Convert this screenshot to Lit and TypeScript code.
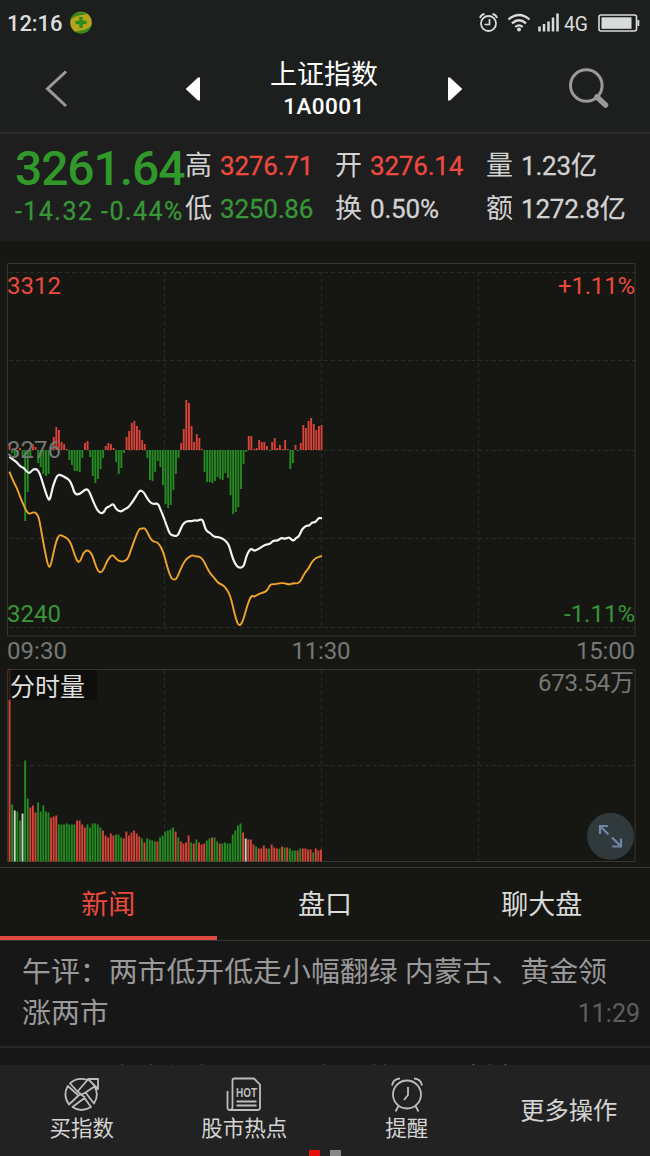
import { LitElement, html, svg, css } from "lit";
import { customElement } from "lit/decorators.js";

// Momentum bars, one per minute; positive values rise above the previous close.
const MOMENTUM = [
  7, -3, -7, -5, 2, -7, -71, -42, -7, 6, 3, -13, -17, -24, -26, -24, 2, 13, 23, 20, 8,
  6, 1, -10, -15, -21, -21, -22, -8, 7, 9, -7, -26, -33, -29, -19, -8, 4, 7, 6, 2,
  -12, -24, -18, -3, 13, 19, 27, 29, 24, 20, 10, 6, -8, -30, -31, -22, -11,
  -17, -35, -54, -58, -55, -40, -24, -8, 7, 21, 50, 47, 24, 8, 16, 12, 1,
  -22, -32, -32, -33, -31, -27, -29, -30, -23, -28, -45, -64, -62, -57, -39, -14, -2,
  14, 14, 1, 2, 10, 8, 8, 4, -1, 8, 12, 2, 5, 1, 10, 1, -19, -13, 5, -1, 7, 25, 22, 29, 32, 26, 20, 24, 25,
];

// Volume bars: colour letter (r, g, w) followed by the height.
const VOLUME =
  "r192 g57 w51 g50 g41 w48 g101 g63 r54 r56 r49 g59 g50 g56 g50 g49 r44 r45 r46 g37 g37 g37 g38 g37 g37 g37 r41 r41 r37 r34 g37 g34 g38 g38 g37 g34 r31 r26 r24 r28 r26 g27 g27 g24 r23 r30 r26 r29 r31 r28 r25 g23 r19 g23 g22 g21 g20 r20 g24 g26 g30 g31 g32 g34 r30 g24 r20 r18 r19 r26 g19 r18 g22 r19 r17 r18 g21 g23 r24 g24 g20 r18 g18 g19 g18 g18 g27 g31 g36 g38 r29 w23 r22 r22 r17 g15 r13 r13 r16 r13 g13 r17 r14 r13 g13 r15 g14 r14 g13 g11 g11 r11 g13 r13 r13 r12 r12 g9 r13 r11 r12"
    .split(" ")
    .map((s) => ({ tone: s[0], h: Number(s.slice(1)) }));

// Curve samples in thirds of a pixel, y measured from the 370px level.
const PRICE =
  "28,260 40,270 50,276 62,291 70,292 85,310 92,307 100,297 113,298 122,318 130,345 144,388 150,390 158,350 172,313 185,316 197,323 208,329 217,348 225,374 240,372 258,356 267,362 278,390 290,418 302,431 312,427 318,413 328,410 340,400 348,418 362,426 375,417 385,413 400,392 412,372 420,360 432,367 440,383 452,399 462,402 474,400 482,420 490,439 500,467 510,494 522,497 532,499 540,482 548,463 560,453 575,454 583,450 592,453 607,446 614,470 620,484 630,488 640,500 652,501 665,504 677,512 687,525 694,552 704,580 716,594 731,591 738,562 746,543 754,535 763,544 780,534 795,524 810,522 820,511 832,513 844,503 856,507 868,501 879,514 888,504 897,500 906,477 920,466 928,468 936,456 946,458 956,443 966,445";
const AVERAGE =
  "28,305 40,335 50,352 60,380 72,408 82,428 90,432 100,426 110,430 117,444 125,490 135,545 145,591 151,590 158,560 168,515 178,493 190,499 205,507 215,525 225,560 235,578 243,570 250,548 262,539 275,550 285,580 293,602 302,609 312,597 322,570 338,552 348,567 362,576 382,571 393,540 405,505 418,475 425,477 432,473 440,482 448,500 458,515 474,516 490,545 500,585 510,617 518,629 528,629 536,612 548,583 560,566 570,560 577,555 588,560 598,559 610,570 620,592 632,612 644,625 655,640 668,644 680,657 692,680 702,725 712,760 720,768 730,750 742,705 754,676 763,681 778,671 790,668 802,662 811,642 825,643 840,639 855,640 868,644 880,639 896,641 905,627 915,607 925,597 935,576 948,563 966,558";

function smooth(data: string): string {
  const p = data.split(" ").map((s) => {
    const [x, y] = s.split(",").map(Number);
    return [x / 3, 370 + y / 3];
  });
  let d = `M${p[0][0]} ${p[0][1]}`;
  for (let i = 1; i < p.length - 1; i++) {
    d += `Q${p[i][0]} ${p[i][1]} ${(p[i][0] + p[i + 1][0]) / 2} ${(p[i][1] + p[i + 1][1]) / 2}`;
  }
  const e = p[p.length - 1];
  return d + `L${e[0]} ${e[1]}`;
}

@customElement("status-bar")
class StatusBar extends LitElement {
  static styles = css`
    :host { display: flex; height: 46px; align-items: center; justify-content: space-between; padding: 0 10px 0 7px; box-sizing: border-box; color: #dcdedd; font: 500 22px Roboto, sans-serif; }
    .left { display: flex; align-items: center; gap: 7px; }
    .time { letter-spacing: -0.1px; }
    svg { display: block; }
  `;
  render() {
    return html`
      <div class="left">
        <span class="time">12:16</span>
        <svg width="24" height="24" viewBox="0 0 24 24">
          <circle cx="12" cy="11.500" r="10.800" fill="#b9a31c" />
          <path d="M1.500 9C3 2 11-1 18 3L9 4.500Q4 6 1.500 9ZM22.500 14C21 21 13 25 6 20.500l9-1.500q5-1.500 7.500-5z" fill="#2e8a1d" />
          <path d="M12 6v11M6.500 11.500h11" stroke="#2e8a1d" stroke-width="3.400" />
        </svg>
      </div>
      <svg width="164" height="24" viewBox="476 11 164 24" fill="none" stroke="#dadcdb">
        <circle cx="488.500" cy="23.500" r="7.500" stroke-width="1.800" />
        <path d="M489.500 19v5.500h-5" stroke-width="1.700" />
        <path d="M480 18q1-3.500 4.500-4M492.500 14q3.500.5 4.500 4" stroke-width="1.800" />
        <path d="M508.500 19.500q10.500-9 21 0M512 23.300q7-6 14 0M515.300 27q3.700-3.200 7.400 0" stroke-width="2.300" />
        <circle cx="519" cy="29.500" r="2" fill="#dadcdb" stroke="none" />
        <path d="M539.500 31.500v-5M544 31.500v-7.500M548.500 31.500v-10M553 31.500v-14M557.500 31.500v-18" stroke-width="2.500" />
        <text x="564" y="30.500" font-family="Roboto, sans-serif" font-size="20" font-weight="400" textLength="24" lengthAdjust="spacingAndGlyphs" fill="#dadcdb" stroke="none">4G</text>
        <rect x="599" y="15" width="37.500" height="16" rx="2" stroke-width="1.600" />
        <rect x="601.500" y="17.300" width="30" height="11.500" fill="#dadcdb" stroke="none" />
        <path d="M638.300 20v6" stroke-width="2" />
      </svg>`;
  }
}

@customElement("title-bar")
class TitleBar extends LitElement {
  static styles = css`
    :host { display: grid; grid-template-columns: 110px 1fr 110px; height: 86px; align-items: center; color: #fff; font-family: Roboto, "Noto Sans CJK SC", sans-serif; }
    .mid { display: flex; justify-content: center; gap: 70px; align-items: center; height: 86px; padding-right: 2px; }
    .name { display: flex; flex-direction: column; align-items: center; }
    .cn { font-size: 27px; line-height: 34px; }
    .code { font-size: 22.500px; line-height: 28px; font-weight: 500; letter-spacing: 0.4px; }
    svg { display: block; }
    .side { height: 86px; }
  `;
  render() {
    return html`
      <svg class="side" width="110" viewBox="0 46 110 86"><path d="M66 71.500 47.500 88.700 66 106" fill="none" stroke="#999" stroke-width="3" /></svg>
      <div class="mid">
        <svg width="15" height="24" viewBox="0 0 15 24"><path d="M.7 12 13 .5H15V23.500H13z" fill="#fff" /></svg>
        <div class="name"><span class="cn">上证指数</span><span class="code">1A0001</span></div>
        <svg width="15" height="24" viewBox="0 0 15 24"><path d="M14.300 12 2 .5H0V23.500H2z" fill="#fff" /></svg>
      </div>
      <svg class="side" width="110" viewBox="540 46 110 86" fill="none" stroke="#999">
        <circle cx="586.300" cy="85.500" r="15.800" stroke-width="3" />
        <path d="M597 97l8.500 8" stroke-width="5.500" stroke-linecap="round" />
      </svg>`;
  }
}

@customElement("quote-panel")
class QuotePanel extends LitElement {
  static styles = css`
    :host { display: grid; grid-template-columns: 170px 150px 151px 1fr; height: 109px; box-sizing: border-box; border-top: 2px solid #2b2c2c; background: #1e1e1e; padding: 11px 0 0 15px; color: #d2d2d2; font: 26px Roboto, "Noto Sans CJK SC", sans-serif; white-space: nowrap; }
    .col { display: flex; flex-direction: column; }
    .row { height: 43px; line-height: 43px; display: flex; gap: 8px; }
    .num { font-weight: 400; font-size: 26px; letter-spacing: -0.2px; -webkit-text-stroke: 0.3px currentColor; }
    .k { font-size: 27px; }
    .up { color: #ed4a3e; }
    .down { color: #379636; }
    .big { font-size: 48px; font-weight: 500; height: 46px; line-height: 48px; color: #31992b; letter-spacing: -1.1px; }
    .chg { font-size: 25px; font-weight: 400; line-height: 41px; letter-spacing: 1.45px; -webkit-text-stroke: 0.3px currentColor; }
  `;
  cell(k: string, v: string, tone = "") {
    return html`<div class="row"><span class="k">${k}</span><span class="num ${tone}">${v}</span></div>`;
  }
  render() {
    return html`
      <div class="col"><div class="big">3261.64</div><div class="chg down">-14.32 -0.44%</div></div>
      <div class="col">${this.cell("高", "3276.71", "up")}${this.cell("低", "3250.86", "down")}</div>
      <div class="col">${this.cell("开", "3276.14", "up")}${this.cell("换", "0.50%")}</div>
      <div class="col">${this.cell("量", "1.23亿")}${this.cell("额", "1272.8亿")}</div>`;
  }
}

@customElement("minute-chart")
class MinuteChart extends LitElement {
  static styles = css`
    :host { display: block; height: 626px; }
    svg { display: block; }
    text { font-family: Roboto, "Noto Sans CJK SC", sans-serif; font-size: 24px; }
    .frame { fill: none; stroke: #343633; }
    .dash { stroke: #292c27; stroke-dasharray: 4 3; fill: none; }
    .up { fill: #d8433a; }
    .down { fill: #258a22; }
    .axis { fill: #777; }
    .r { fill: #d8433a; }
    .g { fill: #258a22; }
    .w { fill: #c8d8c4; }
    .red { fill: #ed4a3e; }
    .green { fill: #379636; }
    .title { fill: #ddd; font-size: 25px; }
  `;
  render() {
    return html`<svg width="650" height="626" viewBox="0 241 650 626">
      <path class="frame" d="M7.500 263.500h627.500v372.500H7.500zM7.500 669.500h627.500v192H7.500z" />
      <path class="dash" d="M9 272.500h626M9 360.500h626M9 450.500h626M9 538.500h626M9 627.500h626M9 765.500h626" />
      <path class="dash" d="M164.500 272v355M321.500 272v355M478.500 272v355M164.500 670v191M321.500 670v191M478.500 670v191" />
      ${MOMENTUM.map((v, i) => svg`<rect class=${v > 0 ? "up" : "down"} x=${8.6 + i * 2.6} y=${v > 0 ? 450 - v : 450} width="1.900" height=${Math.abs(v)} />`)}
      <path d=${smooth(PRICE)} fill="none" stroke="#f4f4f4" stroke-width="2.200" />
      <path d=${smooth(AVERAGE)} fill="none" stroke="#f0a42c" stroke-width="1.900" />
      <text class="red" x="7" y="294" textLength="54">3312</text>
      <text class="red" x="635" y="294" text-anchor="end" textLength="77">+1.11%</text>
      <text class="axis" x="7" y="458" textLength="54">3276</text>
      <text class="green" x="7" y="622" textLength="54">3240</text>
      <text class="green" x="635" y="622" text-anchor="end" textLength="71">-1.11%</text>
      <text class="axis" x="7" y="658.500" textLength="60">09:30</text>
      <text class="axis" x="321" y="658.500" text-anchor="middle" textLength="59">11:30</text>
      <text class="axis" x="635" y="658.500" text-anchor="end" textLength="59">15:00</text>
      ${VOLUME.map((b, i) => svg`<rect class=${b.tone} x=${8.6 + i * 2.595} y=${861.5 - b.h} width="1.900" height=${b.h} />`)}
      <rect x="8" y="670" width="89" height="30" fill="#0c0e0b" fill-opacity=".75" />
      <text class="title" x="10" y="696">分时量</text>
      <text class="axis" x="634" y="691" text-anchor="end" textLength="96">673.54万</text>
      <circle cx="610.500" cy="836.300" r="23.500" fill="#30393b" />
      <path d="M600 834v-8h8M600 826l8.500 8.500M621 838.500v8h-9M620.500 846l-8.500-8.500" fill="none" stroke="#7284a6" stroke-width="2.200" />
    </svg>`;
  }
}

@customElement("news-tabs")
class NewsTabs extends LitElement {
  static properties = { active: { type: Number } };
  declare active: number;
  constructor() {
    super();
    this.active = 0;
  }
  static styles = css`
    :host { display: grid; grid-template-columns: repeat(3, 1fr); height: 74px; box-sizing: border-box; border-top: 1px solid #363735; border-bottom: 1px solid #333; color: #dadada; font: 27px "Noto Sans CJK SC", sans-serif; }
    .tab { display: flex; align-items: center; justify-content: center; border-bottom: 4px solid transparent; padding-top: 1px; }
    .on { color: #ed4a3e; border-color: #df4c42; }
  `;
  render() {
    return ["新闻", "盘口", "聊大盘"].map((t, i) => html`<div class="tab ${i === this.active ? "on" : ""}">${t}</div>`);
  }
}

@customElement("news-list")
class NewsList extends LitElement {
  static styles = css`
    :host { display: block; height: 124px; overflow: hidden; background: #171717; color: #999; font: 28.900px/41px Roboto, "Noto Sans CJK SC", sans-serif; }
    .item { height: 107px; box-sizing: border-box; padding: 11px 10px 0 22px; border-bottom: 2px solid #282828; }
    .last { display: flex; justify-content: space-between; }
    .time { font-size: 25px; color: #5e5e5e; }
    .next { padding: 11px 10px 0 50px; }
  `;
  render() {
    return html`
      <div class="item">
        <div>午评：两市低开低走小幅翻绿 内蒙古、黄金领</div>
        <div class="last"><span>涨两市</span><span class="time">11:29</span></div>
      </div>
      <div class="next">午间大盘解析：午后市场能否继续攀升</div>`;
  }
}

@customElement("action-bar")
class ActionBar extends LitElement {
  static styles = css`
    :host { display: grid; grid-template-columns: repeat(4, 1fr); height: 91px; background: #222; color: #d4d4d4; font: 21.500px/30px "Noto Sans CJK SC", sans-serif; position: relative; }
    .cell { display: flex; flex-direction: column; align-items: center; padding: 11px 0 0 1px; }
    .more { justify-content: center; font-size: 24.300px; padding: 0 0 3px; }
    svg { display: block; fill: none; stroke: #bdbdbd; stroke-width: 1.800; }
    .hot { font: 700 12px "Liberation Sans", sans-serif; fill: #bdbdbd; stroke: none; }
    .dots { position: absolute; left: 309px; bottom: 0; display: flex; gap: 10px; }
    .dot { width: 11px; height: 6px; background: #888; }
    .cur { background: #e8100f; }
  `;
  render() {
    return html`
      <div class="cell">
        <svg width="36" height="36" viewBox="0 0 36 36" stroke-linejoin="round">
          <path d="M6 7.500Q13 .5 23.500 4L13.500 15.500ZM3.800 10Q-1.500 19.500 5 28.500L14.500 19.500ZM30.500 10.500Q35.500 19 30 27.500L21.500 16.500ZM8.500 31Q17 37 27 31L20.500 22ZM13.500 15.500l7.500 6M14.500 19.500 22 16.500M24 3h10v10l-3.500-3.500z" />
        </svg><span>买指数</span>
      </div>
      <div class="cell">
        <svg width="36" height="36" viewBox="0 0 36 36">
          <path d="M6.500 29V4.500q0-2 2-2H28l6 6V31.500q0 2.500-2.500 2.500H4Q1.500 34 1.500 31.500V15M6.500 28v3q0 3-2.500 3M10.500 25.500h20M10.500 29.500h20" />
          <text class="hot" x="10" y="20.500" textLength="21" lengthAdjust="spacingAndGlyphs">HOT</text>
        </svg><span>股市热点</span>
      </div>
      <div class="cell">
        <svg width="36" height="36" viewBox="0 0 36 36">
          <circle cx="18" cy="18.500" r="14" />
          <path d="M19 11v8l-4 5M3 9.500Q4 3 11 2.500M33 9.500Q32 3 25 2.500M9.500 30l-3 5.500M26.500 30l3 5.500" />
        </svg><span>提醒</span>
      </div>
      <div class="cell more">更多操作</div>
      <div class="dots"><i class="dot cur"></i><i class="dot"></i></div>`;
  }
}

@customElement("app-root")
class AppRoot extends LitElement {
  static styles = css`
    :host { display: flex; flex-direction: column; width: 650px; height: 1156px; overflow: hidden; background: #161713; }
    .head { background: #1c1f1e; }
  `;
  render() {
    return html`
      <div class="head"><status-bar></status-bar><title-bar></title-bar></div>
      <quote-panel></quote-panel>
      <minute-chart></minute-chart>
      <news-tabs></news-tabs>
      <news-list></news-list>
      <action-bar></action-bar>`;
  }
}
